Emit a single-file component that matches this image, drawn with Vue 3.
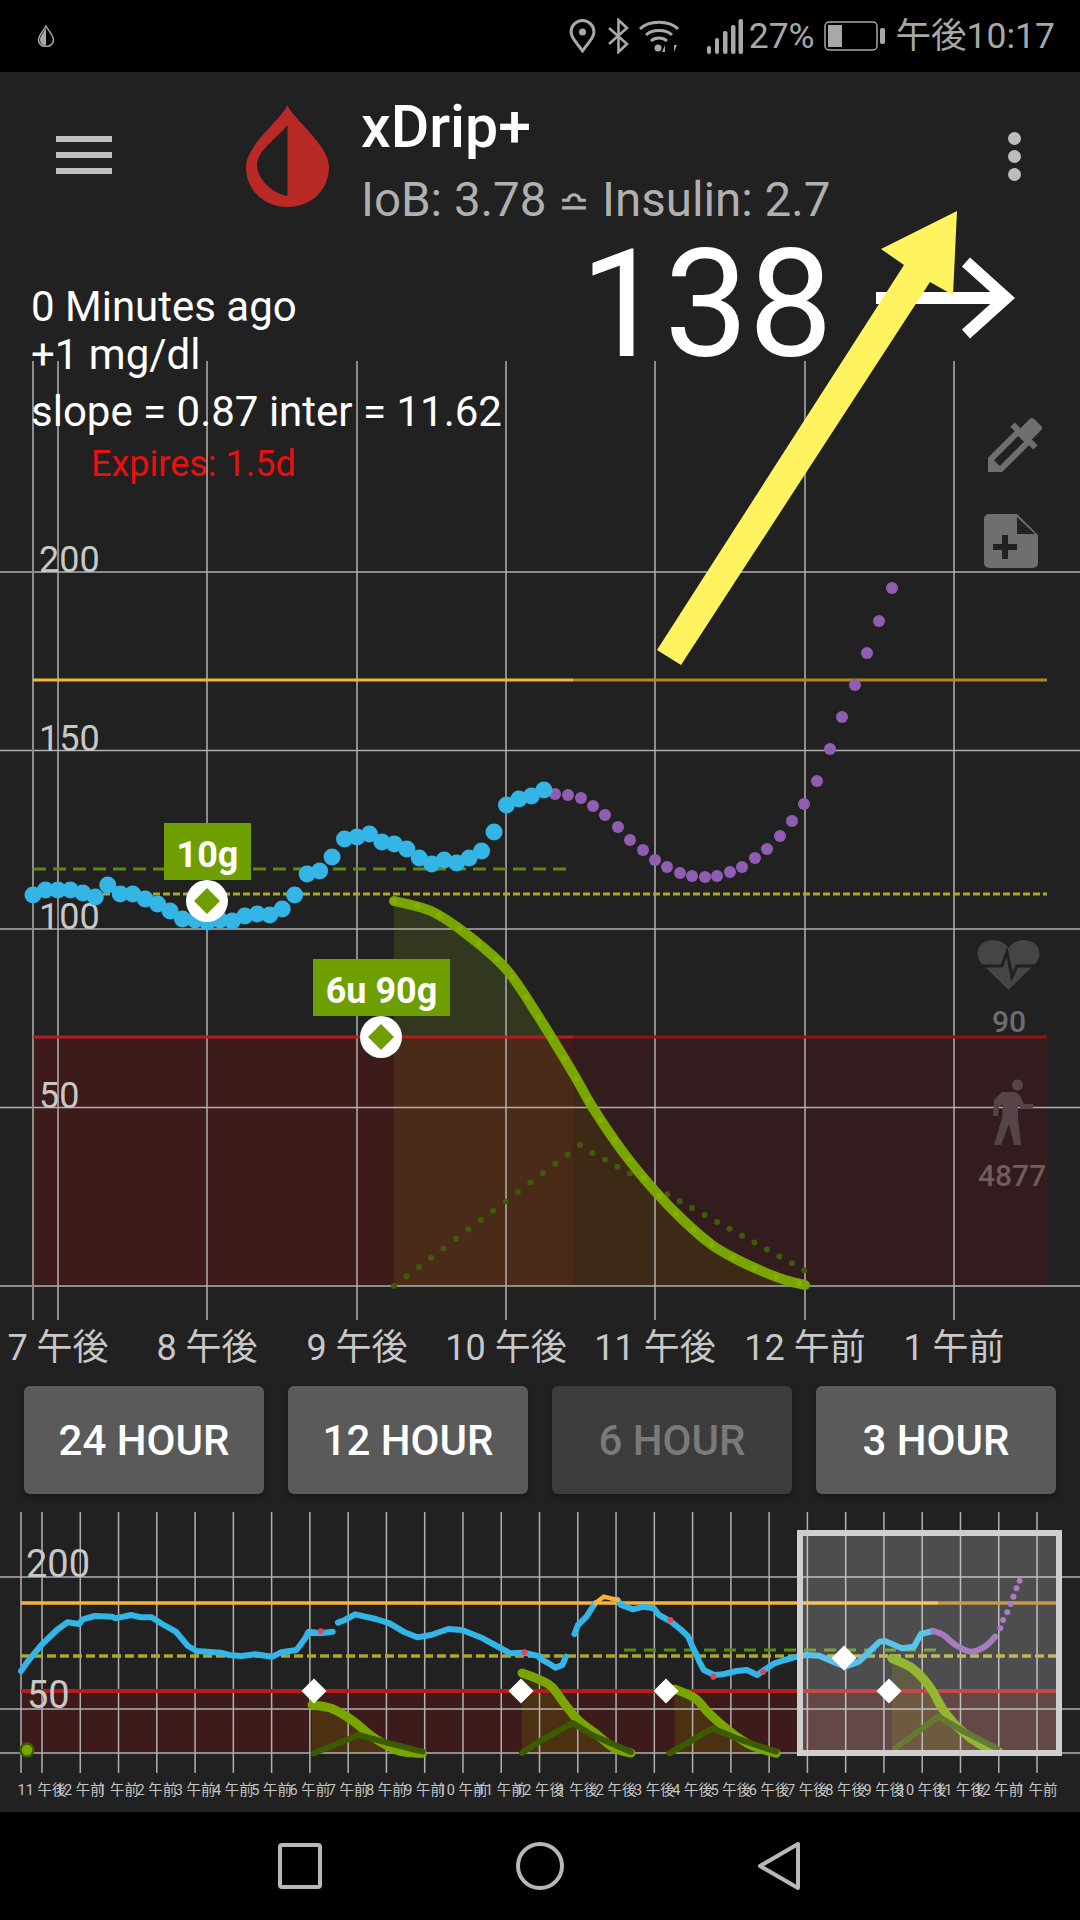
<template>
  <div class="phone">
    <div class="status-bar">
      <svg class="drop-mini" width="20" height="22" viewBox="0 0 20 22">
        <path d="M10 1C7 7 2.500 10 2.500 15a7.500 6.500 0 0 0 15 0C17.500 10 13 7 10 1z" fill="none" stroke="#a8a8a8" stroke-width="1.500" />
        <path d="M10 3C7.500 8 4 11 4 15a6 5.500 0 0 0 6 5.500z" fill="#a8a8a8" />
      </svg>
      <div class="status-right">
        <svg class="st-pin" width="27" height="34" viewBox="0 0 27 34" fill="none" stroke="#a8a8a8" stroke-width="3">
          <path d="M13.500 32C8 24 2 19 2 13a11.500 11.500 0 0 1 23 0c0 6-6 11-11.500 19z" />
          <circle cx="13.500" cy="13" r="3.500" fill="#a8a8a8" stroke="none" />
        </svg>
        <svg class="st-bt" width="21" height="36" viewBox="0 0 21 36" fill="none" stroke="#a8a8a8" stroke-width="2.600">
          <path d="M1 10l18 16-8.500 8V2l8.500 8L1 26" />
        </svg>
        <svg class="st-wifi" width="42" height="33" viewBox="0 0 42 33" fill="none" stroke="#a8a8a8" stroke-width="3">
          <path d="M2 9c9-9 29-9 38 0" />
          <path d="M8 15c6-6 20-6 26 0" />
          <path d="M13 21c4-4 12-4 16 0" />
          <circle cx="20" cy="28" r="3.500" fill="#a8a8a8" stroke="none" />
          <path d="M27 32v-7l-3 7zM36 25v7l3-7z" fill="#a8a8a8" stroke="none" />
        </svg>
        <svg class="st-signal" width="36" height="35" viewBox="0 0 36 35" fill="#a8a8a8">
          <rect x="0" y="27" width="4" height="8" rx="2" />
          <rect x="8" y="19" width="4" height="16" rx="2" />
          <rect x="16" y="12" width="4.500" height="23" rx="2" />
          <rect x="24" y="6" width="4.500" height="29" rx="2" />
          <rect x="31.500" y="0" width="4.500" height="35" rx="2" />
        </svg>
        <span class="st-text st-pct">27%</span>
        <svg class="st-batt" width="61" height="30" viewBox="0 0 61 30">
          <rect x="1" y="1" width="52" height="28" rx="4" fill="none" stroke="#a8a8a8" stroke-width="1.500" />
          <rect x="4" y="4" width="14" height="22" fill="#a8a8a8" />
          <rect x="56" y="7" width="5" height="16" rx="2" fill="#a8a8a8" />
        </svg>
        <span class="st-text st-time">午後10:17</span>
      </div>
    </div>

    <header class="toolbar">
      <div class="burger">
        <span></span>
        <span></span>
        <span></span>
      </div>
      <svg class="logo" width="84" height="103" viewBox="0 0 84 103">
        <path fill-rule="evenodd" fill="#b92a27"
          d="M41.500 0C36 14 0 40 0 62C0 85 18 102 41.500 102S83 85 83 62C83 40 47 14 41.500 0zM41.500 20C30 34 11 46 11 60C11 72 24 88 41.500 91z" />
      </svg>
      <div class="titles">
        <div class="app-name">xDrip+</div>
        <div class="app-sub">IoB: 3.78 <span class="delta">≏</span> Insulin: 2.7</div>
      </div>
      <div class="overflow">
        <span></span>
        <span></span>
        <span></span>
      </div>
    </header>

    <section class="chart-area">
      <svg class="chart" width="1080" height="1166" viewBox="0 208 1080 1166">
        <defs>
          <clipPath id="above-low"><rect x="0" y="800" width="1080" height="237" /></clipPath>
          <clipPath id="low-now"><rect x="0" y="1037" width="573" height="249" /></clipPath>
          <clipPath id="low-later"><rect x="573" y="1037" width="507" height="249" /></clipPath>
        </defs>

        <rect x="33" y="1037" width="540" height="249" fill="#3e1b1b" />
        <rect x="573" y="1037" width="474" height="249" fill="#321c1e" />
        <path :d="carbArea" fill="#31381f" clip-path="url(#above-low)" />
        <path :d="carbArea" fill="#4a2b18" clip-path="url(#low-now)" />
        <path :d="carbArea" fill="#3c2916" clip-path="url(#low-later)" />

        <line v-for="y in gridY" :key="y" x1="0" x2="1080" :y1="y" :y2="y" class="grid" />
        <line x1="33" x2="33" y1="361" y2="1320" class="grid grid-edge" />
        <line v-for="h in hours" :key="h.x" :x1="h.x" :x2="h.x" y1="361" y2="1320" class="grid" />

        <line x1="33" x2="573" y1="680" y2="680" stroke="#f7b23a" stroke-width="3" />
        <line x1="573" x2="1047" y1="680" y2="680" stroke="#b9821a" stroke-width="3" />
        <line x1="33" x2="566" y1="869" y2="869" stroke="#5f8a10" stroke-width="3" stroke-dasharray="13 7" />
        <line x1="33" x2="1047" y1="894" y2="894" stroke="#a9a82a" stroke-width="3" stroke-dasharray="7 3" />
        <line x1="33" x2="573" y1="1037" y2="1037" stroke="#b71c1c" stroke-width="3" />
        <line x1="573" x2="1047" y1="1037" y2="1037" stroke="#8f1414" stroke-width="3" />

        <text v-for="l in yLabels" :key="l.t" x="39" :y="l.y" class="axis">{{ l.t }}</text>
        <text v-for="h in hours" :key="'t' + h.x" :x="h.x" y="1360" class="axis center">{{ h.t }}</text>

        <circle v-for="d in absorbDots" :key="d[0]" :cx="d[0]" :cy="d[1]" r="3" fill="#3f5a0a" />
        <path :d="carbCurve" fill="none" stroke="#78a500" stroke-width="10" stroke-linecap="round" />
        <path :d="carbCurve" fill="none" stroke="#86b006" stroke-width="6" stroke-linecap="round" stroke-dasharray="0 24" />

        <circle v-for="d in purpleDots" :key="d[0]" :cx="d[0]" :cy="d[1]" r="6" fill="#915db3" />
        <circle v-for="d in blueDots" :key="d[0]" :cx="d[0]" :cy="d[1]" r="8.500" fill="#33b5e5" />

        <g v-for="t in treatments" :key="t.text">
          <rect :x="t.bx" :y="t.by" :width="t.bw" height="57" fill="#6f9e00" />
          <text :x="t.bx + t.bw / 2" :y="t.by + 44" class="tag">{{ t.text }}</text>
          <circle :cx="t.cx" :cy="t.cy" r="21" fill="#fff" />
          <path :d="diamond(t.cx, t.cy, 13)" fill="#6f9e00" />
        </g>

        <text x="580" y="356" class="bg-value">138</text>
        <path d="M876 298H1000M966 262L1006 298L966 334" fill="none" stroke="#fff" stroke-width="12" />

        <path fill="#6f6f6f" transform="translate(979 409) scale(3)"
          d="M20.71 5.63l-2.34-2.34c-.39-.39-1.02-.39-1.41 0l-3.12 3.12-1.93-1.91-1.41 1.41 1.42 1.42L3 16.25V21h4.75l8.92-8.92 1.42 1.42 1.41-1.41-1.92-1.92 3.12-3.12c.4-.4.4-1.03.01-1.42zM6.92 19L5 17.08l8.06-8.06 1.92 1.92L6.92 19z" />
        <g transform="translate(984 514)">
          <path d="M5 0H33L54 21V49a5 5 0 0 1-5 5H5a5 5 0 0 1-5-5V5a5 5 0 0 1 5-5z" fill="#6f6f6f" />
          <path d="M33 3V20H51z" fill="#212121" />
          <path d="M9 33H33M21 21V45" stroke="#212121" stroke-width="6" fill="none" />
        </g>

        <path fill="#454545" d="M1008.500 990L981 963C972 950 982 940 993 940C1000 940 1006 944 1008.500 948C1011 944 1017 940 1024 940C1035 940 1045 950 1036 963Z" />
        <path d="M974 966H1002L1007 952L1012 977L1017 966H1043" fill="none" stroke="#212121" stroke-width="3" />
        <text x="992" y="1032" class="side-num side-heart">90</text>
        <circle cx="1017.500" cy="1085" r="5.500" fill="#554548" />
        <path fill="#554548" d="M1002 1092L1014 1092Q1019 1093 1021 1098L1024 1104L1033 1104L1033 1109L1021 1109L1018 1104L1018 1118L1021 1145L1014 1145L1009 1124L1001 1145L994 1145L1002 1118L1003 1104L999 1107L998 1116L993 1116L994 1100Z" />
        <text x="978" y="1186" class="side-num side-steps">4877</text>

        <polygon points="657,650 904,265 881,249 957,211 953,295 930,282 681,665" fill="#fff35f" />
      </svg>

      <div class="readout">
        <p class="line-a">0 Minutes ago</p>
        <p class="line-b">+1 mg/dl</p>
        <p class="line-c">slope = 0.87 inter = 11.62</p>
        <p class="line-d">Expires: 1.5d</p>
      </div>
    </section>

    <div class="range-buttons">
      <button v-for="b in ranges" :key="b" class="range-btn" :class="{ off: b === '6 HOUR' }">{{ b }}</button>
    </div>

    <svg class="preview" width="1080" height="312" viewBox="0 1500 1080 312">
      <rect x="21" y="1691" width="1035" height="62" fill="#3e1b1b" />
      <path v-for="(t, i) in previewCarbs" :key="'a' + i" :d="t.area" fill="rgba(110,100,0,.3)" />

      <line v-for="y in [1577, 1709, 1753]" :key="y" x1="0" x2="1080" :y1="y" :y2="y" class="grid" />
      <line v-for="x in previewLines" :key="x" :x1="x" :x2="x" y1="1512" y2="1773" class="grid" />

      <line x1="21" x2="938" y1="1603" y2="1603" stroke="#f7b23a" stroke-width="3.500" />
      <line x1="938" x2="1056" y1="1603" y2="1603" stroke="#b9821a" stroke-width="3.500" />
      <line x1="624" x2="938" y1="1650" y2="1650" stroke="#5f8a10" stroke-width="3" stroke-dasharray="12 8" />
      <line x1="21" x2="1056" y1="1656" y2="1656" stroke="#a9a82a" stroke-width="3.500" stroke-dasharray="9 4" />
      <line x1="21" x2="1056" y1="1691" y2="1691" stroke="#b71c1c" stroke-width="4" />

      <text x="26" y="1577" class="axis axis-big">200</text>
      <text x="27" y="1708" class="axis axis-big">50</text>
      <text v-for="l in previewLabels" :key="l.x" :x="l.x" y="1795" class="axis-mini">{{ l.t }}</text>

      <path v-for="(t, i) in previewCarbs" :key="'c' + i" :d="t.curve" fill="none" stroke="#78a500" stroke-width="9" stroke-linecap="round" />
      <path v-for="(t, i) in previewCarbs" :key="'d' + i" :d="t.absorb" fill="none" stroke="#3c5a00" stroke-width="6" stroke-linecap="round" stroke-linejoin="round" />
      <circle cx="27" cy="1750" r="6.500" fill="#78a500" stroke="#3c5a00" stroke-width="2.500" />

      <path v-for="(p, i) in previewBlue" :key="'b' + i" :d="p" fill="none" stroke="#33b5e5" stroke-width="6" stroke-linecap="round" stroke-linejoin="round" />
      <path :d="previewHigh" fill="none" stroke="#f7b23a" stroke-width="4.500" stroke-linecap="round" />
      <path :d="previewPurple" fill="none" stroke="#915db3" stroke-width="6" stroke-linecap="round" />
      <circle v-for="d in previewPurpleDots" :key="d[0]" :cx="d[0]" :cy="d[1]" r="3" fill="#915db3" />
      <circle v-for="d in previewRed" :key="d[0]" :cx="d[0]" :cy="d[1]" r="3" fill="#e2455a" />
      <path v-for="d in previewDiamonds" :key="d[0]" :d="diamond(d[0], d[1], 12.500)" fill="#fff" />

      <rect x="800" y="1533" width="259" height="220" fill="rgba(255,255,255,.2)" stroke="#cfcfcf" stroke-width="6" />
    </svg>

    <nav class="nav-bar">
      <svg width="44" height="46" viewBox="0 0 44 46"><rect x="2" y="2" width="40" height="42" rx="2" /></svg>
      <svg width="48" height="48" viewBox="0 0 48 48"><circle cx="24" cy="24" r="22" /></svg>
      <svg width="42" height="48" viewBox="0 0 42 48"><path d="M40 2V46L2 24z" stroke-linejoin="round" /></svg>
    </nav>
  </div>
</template>

<script setup>
const diamond = (x, y, r) => `M${x - r} ${y}L${x} ${y - r}L${x + r} ${y}L${x} ${y + r}Z`

// catmull-rom through the traced points
const smooth = (pts) => {
  let d = `M${pts[0][0]} ${pts[0][1]}`
  for (let i = 0; i < pts.length - 1; i++) {
    const p0 = pts[i - 1] || pts[i]
    const p1 = pts[i]
    const p2 = pts[i + 1]
    const p3 = pts[i + 2] || p2
    const c1x = p1[0] + (p2[0] - p0[0]) / 6
    const c1y = p1[1] + (p2[1] - p0[1]) / 6
    const c2x = p2[0] - (p3[0] - p1[0]) / 6
    const c2y = p2[1] - (p3[1] - p1[1]) / 6
    d += `C${c1x} ${c1y} ${c2x} ${c2y} ${p2[0]} ${p2[1]}`
  }
  return d
}

const gridY = [572, 750.5, 929, 1107.5, 1286]
const yLabels = [
  { t: '200', y: 572 },
  { t: '150', y: 751 },
  { t: '100', y: 929 },
  { t: '50', y: 1108 }
]
const hours = [
  { x: 58, t: '7 午後' },
  { x: 207, t: '8 午後' },
  { x: 357, t: '9 午後' },
  { x: 506, t: '10 午後' },
  { x: 655, t: '11 午後' },
  { x: 805, t: '12 午前' },
  { x: 954, t: '1 午前' }
]

// five minute readings, y as traced from the chart
const blueY = [895, 890, 890, 890, 893, 897, 885, 894, 894, 899, 904, 911, 919, 920, 922, 920, 921, 916, 914, 915, 909, 895, 874, 871, 857, 839, 837, 834, 842, 844, 849, 858, 864, 860, 863, 858, 851, 832, 805, 799, 796, 790]
const blueDots = blueY.map((y, i) => [33 + i * 12.46, y])

const purpleDots = [
  [555, 794], [568, 795], [581, 798], [593, 806], [605, 815], [618, 827], [630, 840], [643, 850], [655, 860],
  [667, 867], [680, 873], [692, 876], [705, 877], [717, 876], [730, 872], [742, 867], [755, 858], [767, 849],
  [780, 836], [792, 821], [804, 804], [817, 781], [830, 749], [842, 717], [855, 685], [867, 653], [879, 621], [892, 588]
]

const carbPts = [[394, 901], [431, 911], [465, 933], [506, 969], [540, 1019], [573, 1073], [593, 1108], [623, 1152], [654, 1190], [683, 1220], [712, 1245], [738, 1260], [764, 1272], [785, 1280], [805, 1285]]
const carbCurve = smooth(carbPts)
const carbArea = `${carbCurve}L805 1286L394 1286Z`

const absorbDots = []
for (let i = 0; i <= 15; i++) absorbDots.push([394 + i * 12.4, 1286 - i * 9.4])
for (let i = 1; i <= 18; i++) absorbDots.push([580 + i * 12.46, 1146 + i * 6.9])

const treatments = [
  { text: '10g', bx: 164, by: 823, bw: 87, cx: 207, cy: 901 },
  { text: '6u 90g', bx: 313, by: 959, bw: 137, cx: 381, cy: 1037 }
]

const ranges = ['24 HOUR', '12 HOUR', '6 HOUR', '3 HOUR']

const z7 = ([x, y]) => [540 + x / 2.9, 1490 + y / 3]
const z8 = ([x, y]) => [x / 2.9, 1490 + y / 3]

const previewLines = [21]
for (let i = 0; i < 27; i++) previewLines.push(42 + i * 38.27)

const hourNames = ['11 午後', '12 午前', '1 午前', '2 午前', '3 午前', '4 午前', '5 午前', '6 午前', '7 午前', '8 午前', '9 午前', '10 午前', '11 午前', '12 午後', '1 午後', '2 午後', '3 午後', '4 午後', '5 午後', '6 午後', '7 午後', '8 午後', '9 午後', '10 午後', '11 午後', '12 午前', '1 午前']
const previewLabels = hourNames.map((t, i) => ({ t, x: 42 + i * 38.27 }))

const line = (pts) => 'M' + pts.map((p) => `${p[0]} ${p[1]}`).join('L')

const previewBlue = [
  [[61, 543], [80, 515], [120, 465], [165, 420], [195, 397], [230, 402], [240, 388], [275, 378], [325, 380], [335, 385], [380, 375], [410, 382], [440, 382], [470, 402], [510, 425], [545, 468], [570, 483], [640, 488], [665, 495], [700, 498], [740, 493], [790, 500], [815, 487], [860, 480], [885, 445], [895, 425], [930, 430], [965, 425]].map(z8),
  [[980, 398], [1000, 390], [1030, 373], [1090, 387], [1130, 400], [1170, 425], [1210, 442], [1250, 435], [1300, 417], [1340, 420], [1400, 445], [1430, 462], [1480, 490], [1520, 488], [1568, 500]].map(z8),
  [[0, 505], [25, 520], [45, 533], [65, 525], [75, 500]].map(z7),
  [[100, 432], [110, 405], [135, 380], [150, 355], [160, 340]].map(z7),
  [[225, 330], [235, 345], [270, 358], [300, 350], [330, 355], [345, 375], [380, 395], [410, 420], [430, 440], [440, 465], [455, 497], [462, 515], [475, 540], [505, 555], [530, 553], [570, 543], [600, 540], [630, 555], [650, 540], [680, 520], [710, 510], [745, 500], [770, 495], [810, 497], [850, 515], [885, 530], [925, 515], [960, 480], [985, 455], [1000, 453], [1050, 475], [1085, 470], [1095, 450], [1105, 432], [1140, 423]].map(z7)
].map(line)
const previewHigh = line([[160, 340], [185, 320], [225, 330]].map(z7))
const previewPurple = smooth([[1140, 423], [1170, 435], [1205, 465], [1250, 485], [1290, 470], [1320, 440]].map(z7))
const previewPurpleDots = [[1335, 415], [1343, 390], [1355, 367], [1365, 342], [1373, 320], [1382, 295], [1391, 272]].map(z7)
const previewRed = [z8([930, 424]), z8([1521, 487]), z7([378, 390]), z7([503, 560]), z7([647, 545])]
const previewDiamonds = [[314, 1691], [521, 1691], [666, 1691], [844, 1658], [889, 1691]]

const carb = (curve, absorb) => {
  const path = smooth(curve)
  const last = curve[curve.length - 1]
  return {
    curve: path,
    area: `${path}L${last[0]} 1753L${curve[0][0]} 1753Z`,
    absorb: line(absorb)
  }
}
const previewCarbs = [
  carb([[905, 645], [960, 655], [1020, 690], [1080, 740], [1120, 765], [1165, 785], [1225, 790]].map(z8), [[910, 790], [1040, 735], [1130, 760], [1225, 785]].map(z8)),
  carb([[522, 1673], [540, 1680], [552, 1687], [564, 1703], [578, 1720], [595, 1733], [614, 1748], [631, 1753]], [[522, 1753], [540, 1741], [573, 1723], [592, 1735], [631, 1752]]),
  carb([[390, 597], [450, 625], [490, 670], [545, 720], [610, 765], [685, 790]].map(z7), [[375, 790], [500, 715], [570, 745], [685, 785]].map(z7)),
  carb([[1020, 505], [1080, 535], [1130, 590], [1170, 660], [1220, 720], [1280, 765], [1330, 785]].map(z7), [[1030, 775], [1155, 680], [1230, 725], [1325, 775]].map(z7))
]
</script>

<style>
html,
body {
  margin: 0;
  background: #000;
}
</style>

<style scoped>
.phone {
  width: 1080px;
  height: 1920px;
  display: flex;
  flex-direction: column;
  background: #212121;
  font-family: Roboto, "Noto Sans CJK JP", sans-serif;
  overflow: hidden;
}

.status-bar {
  height: 72px;
  flex-shrink: 0;
  background: #000;
  display: flex;
  align-items: center;
  justify-content: space-between;
  padding: 0 25px 0 36px;
  box-sizing: border-box;
}

.status-right {
  display: flex;
  align-items: center;
}

.st-bt {
  margin-left: 12px;
}

.st-wifi {
  margin-left: 9px;
}

.st-signal {
  margin-left: 27px;
}

.st-text {
  color: #a8a8a8;
  font-size: 35.5px;
  line-height: 72px;
}

.st-pct {
  margin-left: 6px;
}

.st-batt {
  margin-left: 9px;
}

.st-time {
  margin-left: 11px;
}

.toolbar {
  height: 136px;
  flex-shrink: 0;
  display: flex;
  position: relative;
  z-index: 1;
  padding-left: 56px;
}

.burger {
  width: 56px;
  padding-top: 64px;
  display: flex;
  flex-direction: column;
  gap: 10px;
}

.burger span {
  height: 6px;
  background: #c0c0c0;
}

.logo {
  margin: 33px 0 0 134px;
}

.titles {
  margin-left: 31px;
}

.app-name {
  color: #fff;
  font-size: 59px;
  font-weight: 500;
  line-height: 67px;
  margin-top: 21px;
}

.app-sub {
  color: #b0b0b0;
  font-size: 47.5px;
  line-height: 54px;
  white-space: nowrap;
  margin-top: 13px;
}

.delta {
  font-size: 38px;
}

.overflow {
  position: absolute;
  left: 1008px;
  top: 60px;
  display: flex;
  flex-direction: column;
  gap: 5px;
}

.overflow span {
  width: 13px;
  height: 13px;
  border-radius: 50%;
  background: #bdbdbd;
}

.chart-area {
  position: relative;
  height: 1166px;
  flex-shrink: 0;
}

.chart {
  display: block;
  overflow: visible;
  position: relative;
  z-index: 2;
}

.grid {
  stroke: #b0b0b0;
  stroke-width: 1.5;
}

.grid-edge {
  stroke: #8d8d8d;
  stroke-width: 2;
}

.axis {
  fill: #c8c8c8;
  font-size: 36px;
}

.axis-big {
  font-size: 38px;
}

.center {
  text-anchor: middle;
}

.axis-mini {
  fill: #c4c4c4;
  font-size: 14.5px;
  text-anchor: middle;
}

.tag {
  fill: #fff;
  font-size: 36px;
  font-weight: 700;
  text-anchor: middle;
}

.bg-value {
  fill: #fff;
  font-size: 150px;
}

.side-num {
  font-size: 30px;
  font-weight: 500;
}

.side-heart {
  fill: #6c6c6c;
}

.side-steps {
  fill: #6f5c5c;
}

.readout {
  position: absolute;
  left: 31px;
  top: 74px;
  z-index: 3;
  color: #fff;
  font-size: 42px;
}

.readout p {
  margin: 0;
  white-space: nowrap;
}

.line-a {
  line-height: 49px;
}

.line-b {
  line-height: 48px;
}

.readout .line-c {
  line-height: 58px;
  margin: 4px 0 -2px;
}

.line-d {
  color: #e81010;
  font-size: 36px;
  line-height: 50px;
  padding-left: 60px;
}

.range-buttons {
  display: flex;
  gap: 24px;
  padding: 12px 24px 0;
  flex-shrink: 0;
}

.range-btn {
  width: 240px;
  height: 108px;
  border: 0;
  padding: 0;
  border-radius: 6px;
  background: #5a5a5a;
  color: #fff;
  font-family: inherit;
  font-size: 42px;
  font-weight: 500;
  box-shadow: 0 3px 6px rgba(0, 0, 0, 0.3);
}

.range-btn.off {
  background: #3c3c3c;
  color: #7a7a7a;
}

.preview {
  display: block;
  margin-top: 6px;
  flex-shrink: 0;
}

.nav-bar {
  flex: 1;
  background: #000;
  position: relative;
  display: flex;
  align-items: center;
  justify-content: space-between;
  padding: 0 280px 0 278px;
}

.nav-bar svg {
  fill: none;
  stroke: #b8b8b8;
  stroke-width: 4;
}
</style>
